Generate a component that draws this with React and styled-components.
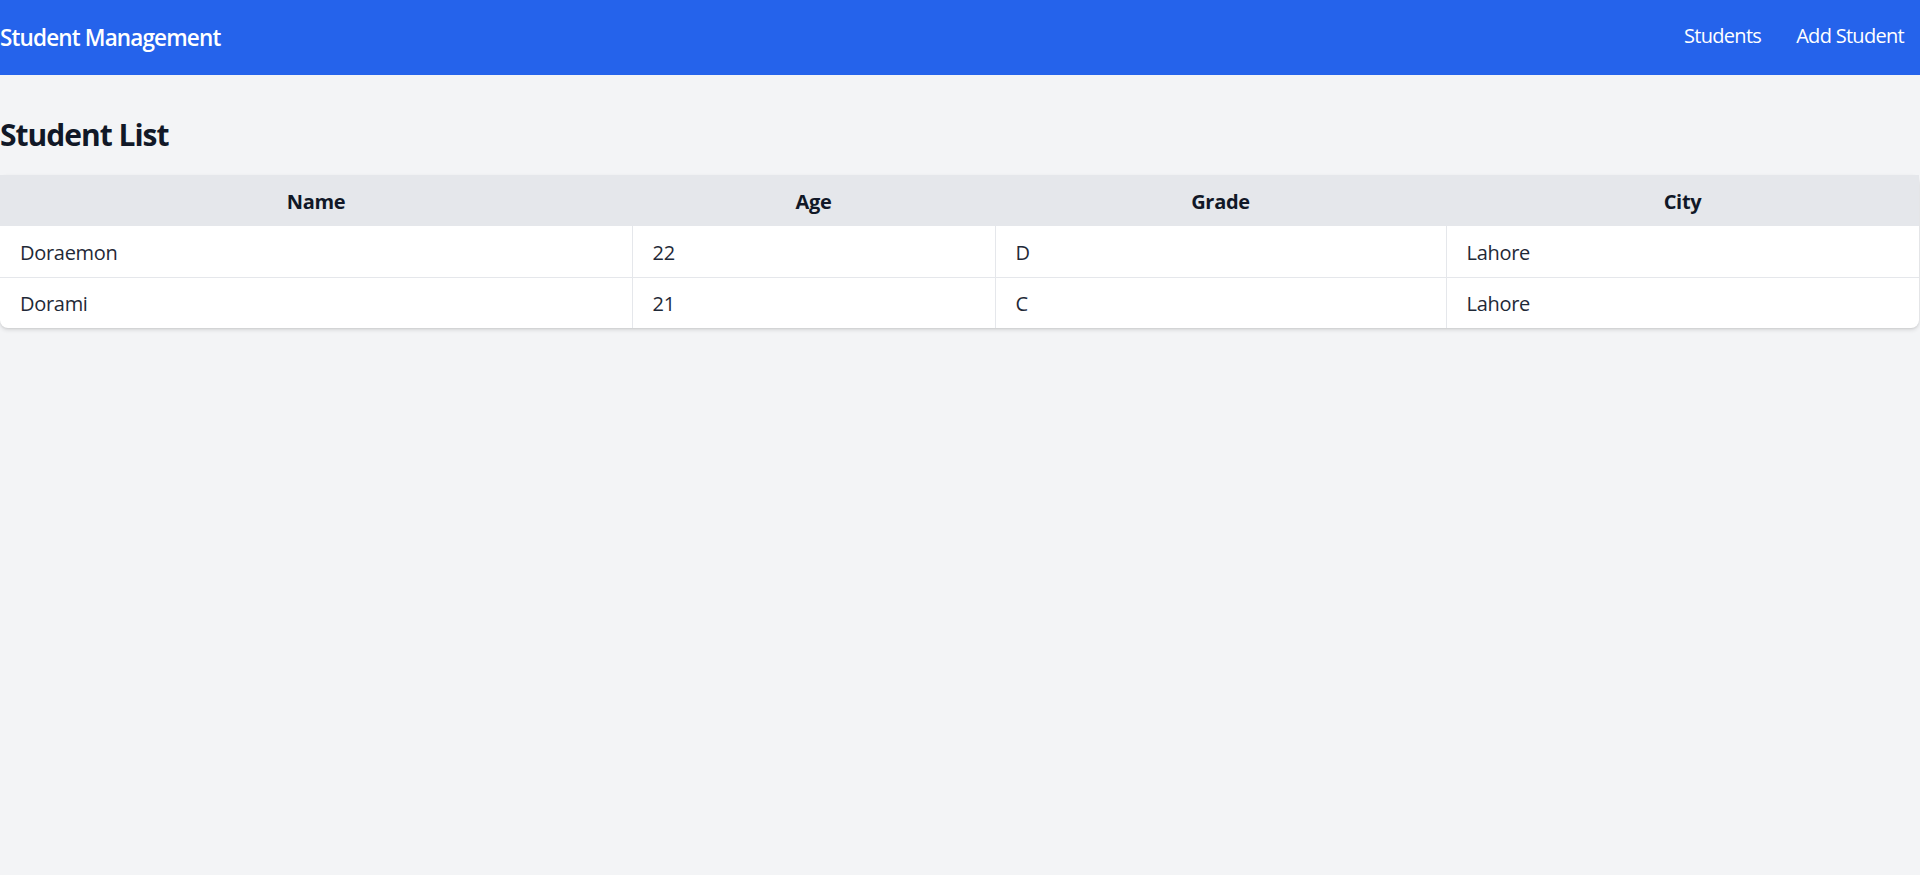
import React from "react";
import styled, { createGlobalStyle } from "styled-components";

const GlobalStyle = createGlobalStyle`
  html, body { margin: 0; padding: 0; }
  body {
    background: #f3f4f6;
    font-family: "Open Sans", "Noto Sans", "Liberation Sans", sans-serif;
    color: #111827;
    min-height: 875px;
  }
  * { box-sizing: border-box; }
`;

const NavBar = styled.nav`
  height: 75px;
  background: #2563eb;
  color: #fff;
  display: flex;
  align-items: center;
  justify-content: space-between;
  padding: 0 16px 0 0;
`;

const Brand = styled.div`
  font-size: 22.5px;
  font-weight: 600;
  letter-spacing: -0.85px;
  line-height: 35px;
`;

const NavLinks = styled.div`
  display: flex;
  gap: 35px;
  align-items: center;
`;

const NavLink = styled.a`
  color: #fff;
  text-decoration: none;
  font-size: 20px;
  line-height: 30px;
  letter-spacing: -0.7px;
  margin-top: -4px;
`;

const Main = styled.main`
  padding-top: 40px;
`;

const Heading = styled.h1`
  margin: 0 0 20px;
  font-size: 30px;
  line-height: 40px;
  font-weight: 700;
  letter-spacing: -1px;
  color: #111827;
`;

const TableCard = styled.div`
  background: #fff;
  border-radius: 8px;
  box-shadow: 0 2px 4px rgba(0, 0, 0, 0.12), 0 1px 2px rgba(0, 0, 0, 0.06);
  width: 1919px;
`;

const Table = styled.table`
  width: 100%;
  border-collapse: collapse;
  table-layout: fixed;
`;

const HeadRow = styled.tr`
  background: #e5e7eb;
`;

const Th = styled.th`
  height: 51px;
  padding: 2px 20px 0;
  font-size: 20px;
  font-weight: 700;
  text-align: center;
  color: #111827;
  letter-spacing: -0.3px;
`;

const Td = styled.td`
  height: 51px;
  padding: 2px 20px 0;
  font-size: 20px;
  color: #1f2937;
  letter-spacing: -0.3px;
  border-left: 1px solid #e5e7eb;
  border-bottom: 1px solid #e5e7eb;
  &:first-child { border-left: none; }
`;

const BodyRow = styled.tr`
  &:last-child td { border-bottom: none; }
`;

const students = [
  { name: "Doraemon", age: 22, grade: "D", city: "Lahore" },
  { name: "Dorami", age: 21, grade: "C", city: "Lahore" },
];

export default function App() {
  return (
    <>
      <GlobalStyle />
      <NavBar>
        <Brand>Student Management</Brand>
        <NavLinks>
          <NavLink href="#">Students</NavLink>
          <NavLink href="#">Add Student</NavLink>
        </NavLinks>
      </NavBar>
      <Main>
        <Heading>Student List</Heading>
        <TableCard>
          <Table>
            <colgroup>
              <col style={{ width: "632px" }} />
              <col style={{ width: "363px" }} />
              <col style={{ width: "451px" }} />
              <col />
            </colgroup>
            <thead>
              <HeadRow>
                <Th>Name</Th>
                <Th>Age</Th>
                <Th>Grade</Th>
                <Th>City</Th>
              </HeadRow>
            </thead>
            <tbody>
              {students.map((s) => (
                <BodyRow key={s.name}>
                  <Td>{s.name}</Td>
                  <Td>{s.age}</Td>
                  <Td>{s.grade}</Td>
                  <Td>{s.city}</Td>
                </BodyRow>
              ))}
            </tbody>
          </Table>
        </TableCard>
      </Main>
    </>
  );
}
